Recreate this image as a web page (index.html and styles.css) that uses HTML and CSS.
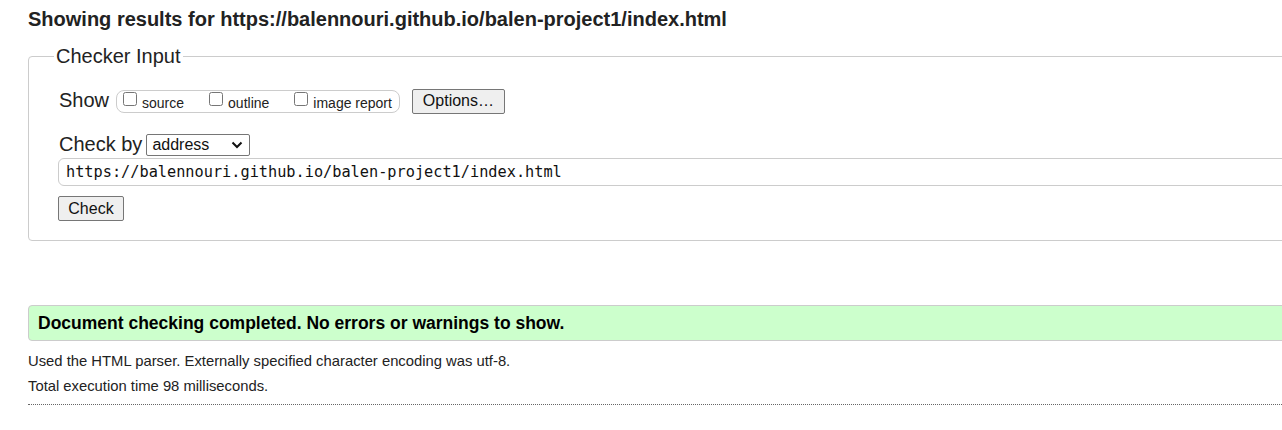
FILE: index.html
```html
<!DOCTYPE html>
<html lang="en">
<head>
<meta charset="utf-8">
<title>Nu Html Checker</title>
<link rel="stylesheet" href="styles.css">
</head>
<body>
<div class="page">
  <h2 class="title">Showing results for https://balennouri.github.io/balen-project1/index.html</h2>
  <form class="checker">
    <fieldset class="input-box">
      <legend class="legend">Checker Input</legend>
      <div class="show-row">
        <span class="big-label">Show</span>
        <fieldset class="opts">
          <label class="opt"><input type="checkbox" class="cb"><span>source</span></label>
          <label class="opt"><input type="checkbox" class="cb"><span>outline</span></label>
          <label class="opt"><input type="checkbox" class="cb"><span>image report</span></label>
        </fieldset>
        <button type="button" class="btn btn-options">Options…</button>
      </div>
      <div class="checkby-row">
        <span class="big-label">Check by</span>
        <span class="select">address<svg class="chev" viewBox="0 0 12 8" width="12" height="8"><path d="M1.5 1.5 L6 6 L10.5 1.5" fill="none" stroke="#111" stroke-width="2"/></svg></span>
      </div>
      <div class="url-input">https://balennouri.github.io/balen-project1/index.html</div>
      <div class="check-row"><button type="button" class="btn btn-check">Check</button></div>
    </fieldset>
  </form>
  <div class="success">Document checking completed. No errors or warnings to show.</div>
  <p class="note note-first">Used the HTML parser. Externally specified character encoding was utf-8.</p>
  <p class="note">Total execution time 98 milliseconds.</p>
  <hr class="sep">
</div>
</body>
</html>
```
FILE: styles.css
```css
html, body {
  margin: 0;
  padding: 0;
  overflow: hidden;
  background: #fff;
}
body {
  font-family: "Liberation Sans", Arial, sans-serif;
  color: #222;
}
.page {
  padding-left: 28px;
  width: 1320px;
}
.title {
  margin: 0;
  padding-top: 7px;
  font-size: 20px;
  line-height: 24px;
  font-weight: bold;
  color: #222;
}
.checker {
  margin: 13px 0 0 0;
}
.input-box {
  margin: 0;
  border: 1px solid #ccc;
  border-radius: 4px;
  padding: 0 0 19px 30px;
  min-width: 0;
}
.legend {
  font-size: 20px;
  line-height: 24px;
  padding: 0 2px;
  margin-left: -5px;
  color: #222;
}
.show-row {
  display: flex;
  align-items: center;
  height: 26px;
  margin-top: 20px;
}
.big-label {
  font-size: 20px;
  line-height: 24px;
  padding-bottom: 2px;
}
.opts {
  display: flex;
  align-items: center;
  margin: 0 0 0 7px;
  padding: 0 7px 0 6px;
  height: 21px;
  border: 1px solid #ccc;
  border-radius: 8px;
  min-width: 0;
}
.opt {
  display: flex;
  align-items: center;
  font-size: 14px;
  margin-right: 25px;
}
.opt:last-child {
  margin-right: 0;
}
.cb {
  width: 14px;
  height: 14px;
  margin: 0 5px 5px 0;
}
.opt span {
  padding-top: 3px;
}
.btn {
  font-family: "Liberation Sans", Arial, sans-serif;
  font-size: 16px;
  color: #111;
  background: #efefef;
  border: 1px solid #767676;
  border-radius: 2px;
  padding: 0;
}
.btn-options {
  margin-left: 12px;
  width: 93px;
  height: 25px;
}
.checkby-row {
  display: flex;
  align-items: center;
  height: 24px;
  margin-top: 19px;
}
.select {
  display: flex;
  align-items: center;
  justify-content: space-between;
  box-sizing: border-box;
  margin-left: 4px;
  width: 104px;
  height: 22px;
  padding: 0 6px 0 5px;
  border: 1px solid #767676;
  border-radius: 2px;
  font-size: 16px;
  color: #111;
  background: #fff;
}
.chev {
  display: block;
}
.url-input {
  box-sizing: border-box;
  margin-top: 1px;
  margin-left: -1px;
  height: 28px;
  width: 1300px;
  border: 1px solid #ccc;
  border-radius: 6px;
  padding: 0 6px 0 7px;
  font-family: "DejaVu Sans Mono", "Liberation Mono", monospace;
  font-size: 15.25px;
  line-height: 26px;
  color: #111;
}
.check-row {
  margin-top: 10px;
  margin-left: -1px;
  height: 25px;
  display: flex;
}
.btn-check {
  width: 66px;
  height: 25px;
}
.success {
  margin-top: 64px;
  box-sizing: border-box;
  height: 36px;
  border: 1px solid #ccc;
  border-radius: 4px;
  background: #ccffcc;
  padding-left: 9px;
  font-size: 17.5px;
  font-weight: bold;
  line-height: 34px;
  color: #000;
}
.note {
  margin: 5px 0 0 0;
  font-size: 14.8px;
  line-height: 20px;
  color: #222;
}
.note-first {
  margin-top: 10px;
}
.sep {
  margin: 8px 0 0 0;
  border: 0;
  border-top: 1px dotted #666;
  height: 0;
}
```
